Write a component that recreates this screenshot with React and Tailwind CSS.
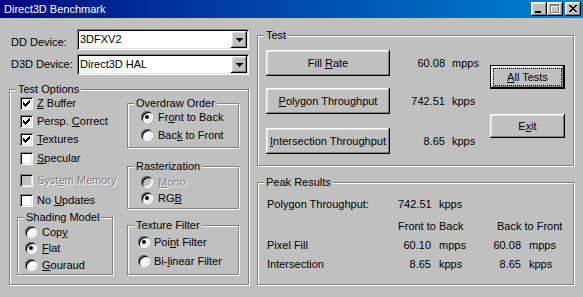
import React from "react";

const raised =
  "shadow-[inset_-1px_-1px_0_#000,inset_1px_1px_0_#fff,inset_-2px_-2px_0_#808080,inset_2px_2px_0_#dfdfdf]";
const sunken =
  "shadow-[inset_1px_1px_0_#808080,inset_-1px_-1px_0_#fff,inset_2px_2px_0_#000,inset_-2px_-2px_0_#dfdfdf]";
const disabledText = "text-[#808080] [text-shadow:1px_1px_0_#fff]";

function Group({ title, className = "", children }) {
  return (
    <div
      className={`relative border border-[#808080] shadow-[inset_1px_1px_0_#fff,1px_1px_0_#fff] ${className}`}
    >
      <span className="absolute left-[6px] top-[-7px] bg-[#c0c0c0] px-[2px] leading-[13px] whitespace-nowrap">
        {title}
      </span>
      {children}
    </div>
  );
}

function Check({ checked, disabled, className = "", children }) {
  return (
    <div className={`flex items-center h-[13px] ${className}`}>
      <div
        className={`w-[13px] h-[13px] shrink-0 flex items-center justify-center ${
          disabled ? "bg-[#c0c0c0]" : "bg-white"
        } ${sunken}`}
      >
        {checked && (
          <svg width="7" height="7" viewBox="0 0 7 7" shapeRendering="crispEdges">
            <path
              d="M0 2h1v3H0zM1 3h1v3H1zM2 4h1v3H2zM3 3h1v3H3zM4 2h1v3H4zM5 1h1v3H5zM6 0h1v3H6z"
              fill="#000"
            />
          </svg>
        )}
      </div>
      <span className={`ml-[4px] leading-[13px] whitespace-nowrap ${disabled ? disabledText : ""}`}>
        {children}
      </span>
    </div>
  );
}

function Radio({ checked, disabled, gap = "ml-[5px]", className = "", children }) {
  return (
    <div className={`flex items-center h-[12px] ${className}`}>
      <div
        className={`w-[12px] h-[12px] rounded-full shrink-0 flex items-center justify-center ${
          disabled ? "bg-[#c0c0c0]" : "bg-white"
        } ${sunken}`}
      >
        {checked && <div className="w-[4px] h-[4px] rounded-full bg-black" />}
      </div>
      <span className={`${gap} leading-[13px] whitespace-nowrap ${disabled ? disabledText : ""}`}>
        {children}
      </span>
    </div>
  );
}

function Btn({ className = "", children }) {
  return (
    <div className={`flex items-center justify-center bg-[#c0c0c0] whitespace-nowrap ${raised} ${className}`}>
      <span>{children}</span>
    </div>
  );
}

function Combo({ value }) {
  return (
    <div className={`flex-1 h-[21px] bg-white flex items-center p-[2px] ${sunken}`}>
      <span className="flex-1 pl-[1px] leading-[13px]">{value}</span>
      <div className={`w-[16px] h-[17px] bg-[#c0c0c0] flex items-center justify-center ${raised}`}>
        <svg width="7" height="4" viewBox="0 0 7 4" shapeRendering="crispEdges">
          <path d="M0 0h7v1H0zM1 1h5v1H1zM2 2h3v1H2zM3 3h1v1H3z" fill="#000" />
        </svg>
      </div>
    </div>
  );
}

function TitleBtn({ children }) {
  return (
    <div className={`w-[16px] h-[14px] bg-[#c0c0c0] ${raised}`}>
      <svg width="16" height="14" viewBox="0 0 16 14" shapeRendering="crispEdges">
        {children}
      </svg>
    </div>
  );
}

export default function App() {
  return (
    <div className="w-[583px] h-[297px] bg-[#c0c0c0] overflow-hidden font-['Liberation_Sans',Arial,sans-serif] text-[11px] leading-[13px] text-black">
      {/* Title bar */}
      <div className="h-[18px] flex items-center bg-linear-to-r from-[#000080] to-[#1084d0]">
        <span className="pl-[4px] text-white">Direct3D Benchmark</span>
        <div className="ml-auto flex items-center mr-[2px]">
          <TitleBtn>
            <path d="M4 9h6v2H4z" fill="#000" />
          </TitleBtn>
          <TitleBtn>
            <path d="M4 3h9v2H4zM4 5h1v7H4zM12 5h1v7h-1zM4 11h9v1H4z" fill="#fff" />
            <path d="M3 2h9v2H3zM3 4h1v7H3zM11 4h1v7h-1zM3 10h9v1H3z" fill="#808080" />
          </TitleBtn>
          <div className="ml-[2px]">
            <TitleBtn>
              <path
                d="M4 3h2v1H4zM10 3h2v1h-2zM5 4h2v1H5zM9 4h2v1H9zM6 5h4v1H6zM7 6h2v1H7zM6 7h4v1H6zM5 8h2v1H5zM9 8h2v1H9zM4 9h2v1H4zM10 9h2v1h-2z"
                fill="#000"
              />
            </TitleBtn>
          </div>
        </div>
      </div>

      {/* Body */}
      <div className="flex pt-[11px]">
        {/* Left column */}
        <div className="ml-[9px] w-[240px] flex flex-col">
          <div className="flex h-[21px]">
            <span className="w-[68px] pl-[2px] pt-[7px] whitespace-nowrap">DD Device:</span>
            <Combo value="3DFXV2" />
          </div>
          <div className="flex h-[21px] mt-[4px]">
            <span className="w-[68px] pl-[2px] pt-[4px] whitespace-nowrap">D3D Device:</span>
            <Combo value="Direct3D HAL" />
          </div>

          <Group title="Test Options" className="mt-[14px] h-[196px] flex">
            {/* left sub-column */}
            <div className="ml-[7px] w-[96px] flex flex-col">
              <div className="pl-[3px] pt-[7px] flex flex-col">
                <Check checked>
                  <u>Z</u> Buffer
                </Check>
                <Check checked className="mt-[5px]">
                  Persp. <u>C</u>orrect
                </Check>
                <Check checked className="mt-[5px]">
                  <u>T</u>extures
                </Check>
                <Check className="mt-[6px]">
                  <u>S</u>pecular
                </Check>
                <Check disabled className="mt-[9px]">
                  Syst<u>e</u>m Memory
                </Check>
                <Check className="mt-[7px]">
                  No <u>U</u>pdates
                </Check>
              </div>
              <Group title="Shading Model" className="mt-[10px] h-[58px] w-[96px]">
                <div className="pl-[7px] pt-[8px] flex flex-col">
                  <Radio>
                    Cop<u>y</u>
                  </Radio>
                  <Radio checked className="mt-[4px]">
                    <u>F</u>lat
                  </Radio>
                  <Radio className="mt-[5px]">
                    <u>G</u>ouraud
                  </Radio>
                </div>
              </Group>
            </div>

            {/* right sub-column */}
            <div className="ml-[14px] w-[112px] flex flex-col">
              <Group title="Overdraw Order" className="mt-[13px] h-[45px]">
                <div className="pl-[13px] pt-[7px] flex flex-col">
                  <Radio checked>
                    Fr<u>o</u>nt to Back
                  </Radio>
                  <Radio className="mt-[6px]">
                    Bac<u>k</u> to Front
                  </Radio>
                </div>
              </Group>
              <Group title="Rasterization" className="mt-[18px] h-[43px]">
                <div className="pl-[13px] pt-[9px] flex flex-col">
                  <Radio disabled>
                    <u>M</u>ono
                  </Radio>
                  <Radio checked className="mt-[4px]">
                    RG<u>B</u>
                  </Radio>
                </div>
              </Group>
              <Group title="Texture Filter" className="mt-[16px] h-[50px]">
                <div className="pl-[10px] pt-[10px] flex flex-col">
                  <Radio checked gap="ml-[4px]">
                    Poi<u>n</u>t Filter
                  </Radio>
                  <Radio gap="ml-[4px]" className="mt-[7px]">
                    Bi-<u>l</u>inear Filter
                  </Radio>
                </div>
              </Group>
            </div>
          </Group>
        </div>

        {/* Right column */}
        <div className="ml-[8px] w-[317px] flex flex-col">
          <Group title="Test" className="mt-[6px] h-[131px] flex">
            <div className="ml-[8px] pt-[14px] w-[124px] flex flex-col">
              <Btn className="h-[26px]">
                Fill <u>R</u>ate
              </Btn>
              <Btn className="h-[26px] mt-[12px]">
                <u>P</u>olygon Throughput
              </Btn>
              <Btn className="h-[26px] mt-[14px]">
                <u>I</u>ntersection Throughput
              </Btn>
            </div>
            <div className="w-[100px] pt-[14px] flex flex-col">
              <div className="h-[26px] flex items-center">
                <span className="w-[55px] text-right">60.08</span>
                <span className="ml-[7px]">mpps</span>
              </div>
              <div className="h-[26px] mt-[12px] flex items-center">
                <span className="w-[55px] text-right">742.51</span>
                <span className="ml-[7px]">kpps</span>
              </div>
              <div className="h-[26px] mt-[14px] flex items-center">
                <span className="w-[55px] text-right">8.65</span>
                <span className="ml-[7px]">kpps</span>
              </div>
            </div>
            <div className="w-[75px] pt-[29px] flex flex-col">
              <div className="h-[24px] border border-black">
                <div className={`w-full h-full p-[2px] bg-[#c0c0c0] ${raised}`}>
                  <div className="w-full h-full border border-dotted border-black flex items-center justify-center">
                    <span>
                      <u>A</u>ll Tests
                    </span>
                  </div>
                </div>
              </div>
              <Btn className="h-[24px] mt-[25px]">
                E<u>x</u>it
              </Btn>
            </div>
          </Group>

          <Group title="Peak Results" className="mt-[16px] h-[103px]">
            <div className="pl-[9px] pt-[15px] flex flex-col whitespace-nowrap">
              <div className="flex h-[13px]">
                <span className="w-[131px]">Polygon Throughput:</span>
                <span className="w-[33px] text-right">742.51</span>
                <span className="ml-[8px]">kpps</span>
              </div>
              <div className="flex h-[13px] mt-[9px]">
                <span className="w-[131px]"></span>
                <span className="w-[99px]">Front to Back</span>
                <span>Back to Front</span>
              </div>
              <div className="flex h-[13px] mt-[6px]">
                <span className="w-[131px]">Pixel Fill</span>
                <span className="w-[33px] text-right">60.10</span>
                <span className="ml-[8px] w-[42px]">mpps</span>
                <span className="w-[40px] text-right">60.08</span>
                <span className="ml-[8px]">mpps</span>
              </div>
              <div className="flex h-[13px] mt-[6px]">
                <span className="w-[131px]">Intersection</span>
                <span className="w-[33px] text-right">8.65</span>
                <span className="ml-[8px] w-[42px]">kpps</span>
                <span className="w-[40px] text-right">8.65</span>
                <span className="ml-[8px]">kpps</span>
              </div>
            </div>
          </Group>
        </div>
      </div>
    </div>
  );
}
